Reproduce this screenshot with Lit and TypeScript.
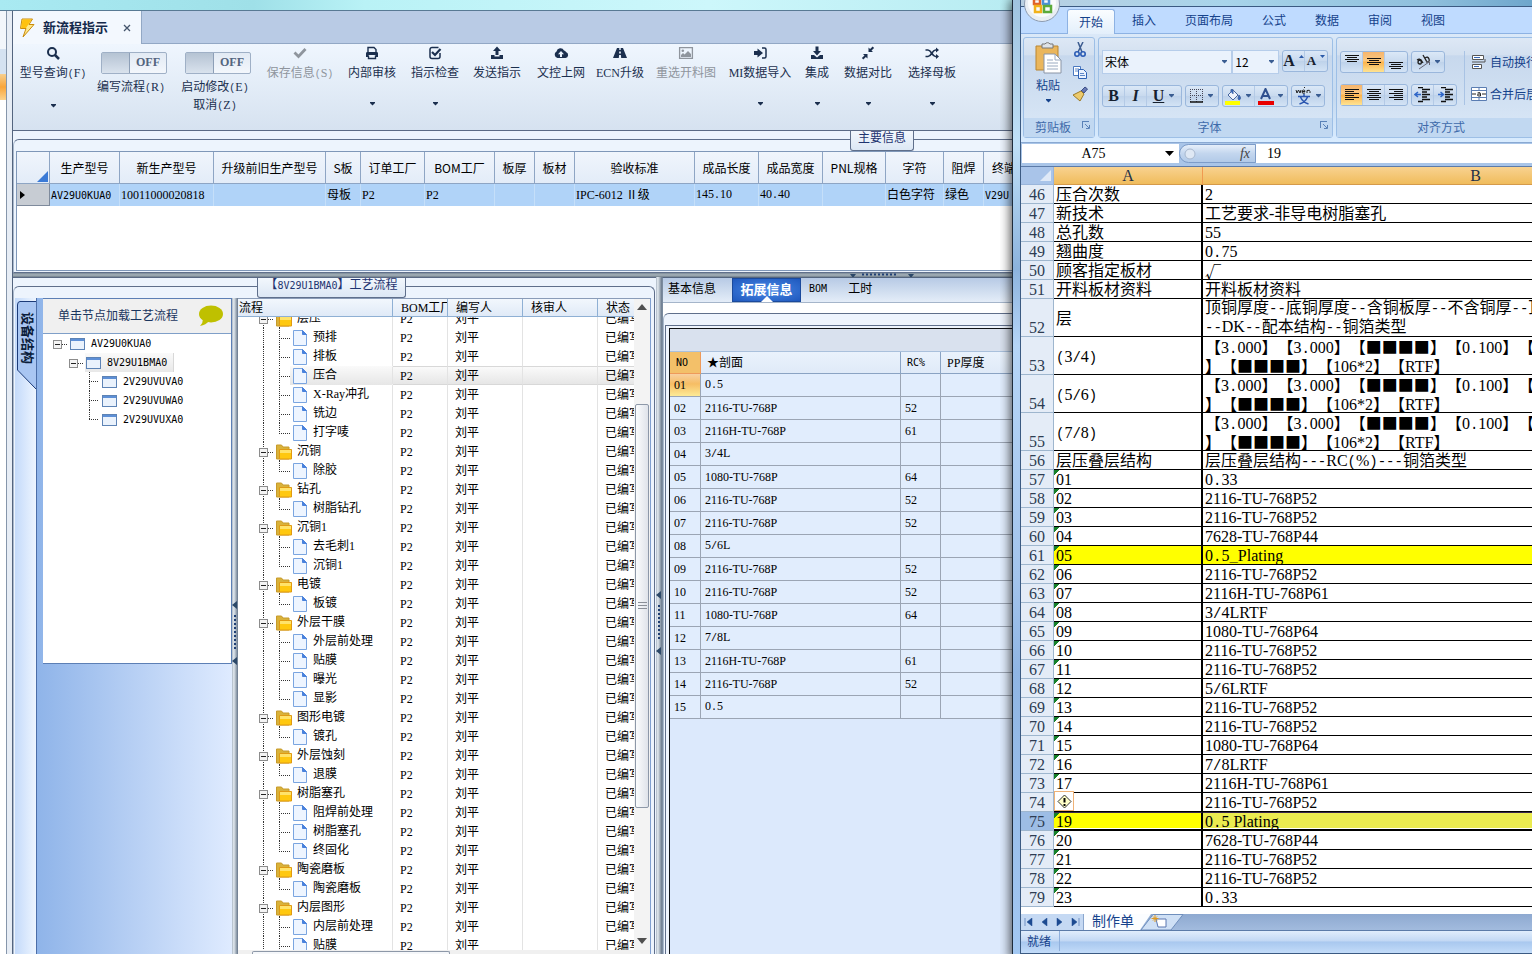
import { LitElement, html, svg, css, nothing } from "lit";
import { customElement } from "lit/decorators.js";
import { classMap } from "lit/directives/class-map.js";

const base = css`
  * { box-sizing: border-box; }
  :host {
    font-family: "Liberation Serif", "Noto Sans CJK SC", serif;
    font-size: 12px;
    line-height: 16px;
    text-spacing-trim: space-all;
  }
  button, input, select {
    font: inherit; color: inherit; margin: 0; padding: 0; border: 0; background: none; border-radius: 0;
  }
  svg { display: block; flex: none; }
  table { border-collapse: separate; border-spacing: 0; table-layout: fixed; }
  th, td { padding: 0; text-align: left; font-weight: normal; white-space: nowrap; overflow: hidden; }
  a { color: inherit; text-decoration: none; }
  .code { font-family: "DejaVu Sans Mono", monospace; font-size: 10px; }
  .wide { font-family: "Noto Sans CJK SC", sans-serif; }
  .punct { font-family: "Liberation Mono", monospace; font-size: var(--punct, 10px); }
`;

/** Keeps punctuation on the half-width grid and symbols on the full-width one. */
const cell = (text: string) =>
  text.split(/(--+|[.\/()_]|[■√★]+)/).map((part) =>
    /^[■√★]+$/.test(part)
      ? html`<span class="wide">${part}</span>`
      : /^(--+|[.\/()_])$/.test(part)
        ? html`<span class="punct">${part}</span>`
        : part
  );

const caret = html`<svg width="7" height="4" viewBox="0 0 7 4"><path d="M1 0h5v1L3.500 3.500 1 1z" fill="currentColor" /></svg>`;

const icons: Record<string, unknown> = {
  search: svg`<circle cx="7" cy="7" r="4" fill="none" stroke="currentColor" stroke-width="2"/><path d="M10 10l4 4" stroke="currentColor" stroke-width="2.500"/>`,
  check: svg`<path d="M2.500 7.500L6.500 11.500 13.500 4" fill="none" stroke="currentColor" stroke-width="2.800"/>`,
  print: svg`<path d="M4 7V2.500h6L12 4.500V7" fill="none" stroke="currentColor" stroke-width="1.400"/><path d="M3.500 7h9C13.500 7 14 7.500 14 8.500V12h-2.500v-2h-7v2H2V8.500C2 7.500 2.500 7 3.500 7z" fill="currentColor"/><path d="M4.500 10.500v3h7v-3" fill="none" stroke="currentColor" stroke-width="1.400"/>`,
  tick: svg`<path d="M13 8v3.500a2 2 0 0 1-2 2H5a2 2 0 0 1-2-2v-7a2 2 0 0 1 2-2h6.500" fill="none" stroke="currentColor" stroke-width="1.500"/><path d="M5 7l3 3 5.500-6" fill="none" stroke="currentColor" stroke-width="2.200"/>`,
  upload: svg`<path d="M8 1.500L12 6H9.500v4h-3V6H4z" fill="currentColor"/><path d="M2 10h3.500v1.500h5V10H14v4H2z" fill="currentColor"/>`,
  cloud: svg`<path d="M4.500 13A3.500 3.500 0 0 1 3.500 6.500 4 4 0 0 1 11 5.500 3.200 3.200 0 0 1 13 7 3.100 3.100 0 0 1 12.500 13z" fill="currentColor"/><path d="M8 6l3 3.200H9V12H7V9.200H5z" fill="#eaf2fc"/>`,
  road: svg`<path d="M5 3h2.300v2h1.400V3H11l4 10H9.200l-.3-3H7.100l-.3 3H1zM7.200 6.500L7.100 8.500h1.800l-.1-2z" fill="currentColor" fill-rule="evenodd"/>`,
  image: svg`<path d="M1.600 2.600h12.800v10.800H1.600z" fill="none" stroke="currentColor" stroke-width="1.300"/><circle cx="4.800" cy="5.800" r="1.300" fill="currentColor"/><path d="M3 12V10l2-2 1.500 1.500L10 6l3 3v3z" fill="currentColor"/>`,
  signin: svg`<path d="M2 6h3.500V3.500L11 8l-5.500 4.500V10H2z" fill="currentColor"/><path d="M10 3h2.500Q14 3 14 4.500v7Q14 13 12.500 13H10" fill="none" stroke="currentColor" stroke-width="1.500"/>`,
  download: svg`<path d="M6.500 1.500h3V6H12L8 10.500 4 6h2.500z" fill="currentColor"/><path d="M2 10h3l3 2.500L11 10h3v4H2z" fill="currentColor"/>`,
  compress: svg`<path d="M8.500 2.500l1.600 1.600L12.700 1.500l1.400 1.400-2.600 2.600L13 7H8.500zM7.500 13.500l-1.600-1.600-2.600 2.600-1.400-1.400 2.600-2.600L3 9h4.500z" fill="currentColor"/>`,
  shuffle: svg`<path d="M1.500 5H4c3.500 0 4 6.500 7.500 6.500H13M1.500 11.500H4C7.500 11.500 8 5 11.500 5H13" fill="none" stroke="currentColor" stroke-width="1.700"/><path d="M12 2.500L15 5l-3 2.500zM12 9l3 2.500L12 14z" fill="currentColor"/>`,
};
const icon = (name: string) => html`<svg width="16" height="16" viewBox="0 0 16 16">${icons[name]}</svg>`;

type Tool = { label: string; icon?: string; menu?: boolean; off?: boolean; extra?: string };
const tools: Tool[] = [
  { label: "型号查询(F)", icon: "search", menu: true },
  { label: "编写流程(R)" },
  { label: "启动修改(E)", extra: "取消(Z)" },
  { label: "保存信息(S)", icon: "check", off: true },
  { label: "内部审核", icon: "print", menu: true },
  { label: "指示检查", icon: "tick", menu: true },
  { label: "发送指示", icon: "upload" },
  { label: "文控上网", icon: "cloud" },
  { label: "ECN升级", icon: "road" },
  { label: "重选开料图", icon: "image", off: true },
  { label: "MI数据导入", icon: "signin", menu: true },
  { label: "集成", icon: "download", menu: true },
  { label: "数据对比", icon: "compress", menu: true },
  { label: "选择母板", icon: "shuffle", menu: true },
];

const infoCols: [string, number, string][] = [
  ["生产型号", 70, "AV29U0KUA0"], ["新生产型号", 94, "10011000020818"], ["升级前旧生产型号", 112, ""],
  ["S板", 35, "母板"], ["订单工厂", 64, "P2"], ["BOM工厂", 70, "P2"], ["板厚", 40, ""], ["板材", 40, ""],
  ["验收标准", 120, "IPC-6012 Ⅱ级"], ["成品长度", 64, "145.10"], ["成品宽度", 64, "40.40"],
  ["PNL规格", 63, ""], ["字符", 58, "白色字符"], ["阻焊", 40, "绿色"], ["终端", 42, "V29U"],
];

const flow: [string, string[]][] = [
  ["层压", ["预排", "排板", "压合", "X-Ray冲孔", "铣边", "打字唛"]],
  ["沉铜", ["除胶"]],
  ["钻孔", ["树脂钻孔"]],
  ["沉铜1", ["去毛刺1", "沉铜1"]],
  ["电镀", ["板镀"]],
  ["外层干膜", ["外层前处理", "贴膜", "曝光", "显影"]],
  ["图形电镀", ["镀孔"]],
  ["外层蚀刻", ["退膜"]],
  ["树脂塞孔", ["阻焊前处理", "树脂塞孔", "终固化"]],
  ["陶瓷磨板", ["陶瓷磨板"]],
  ["内层图形", ["内层前处理", "贴膜"]],
];

const stack: [string, string][] = [
  ["0.5", ""], ["2116-TU-768P", "52"], ["2116H-TU-768P", "61"], ["3/4L", ""], ["1080-TU-768P", "64"],
  ["2116-TU-768P", "52"], ["2116-TU-768P", "52"], ["5/6L", ""], ["2116-TU-768P", "52"], ["2116-TU-768P", "52"],
  ["1080-TU-768P", "64"], ["7/8L", ""], ["2116H-TU-768P", "61"], ["2116-TU-768P", "52"], ["0.5", ""],
];

const dots = "stroke-dasharray:1 1";
const expander = (x: number, y: number) => svg`
  <rect x=${x + 0.5} y=${y + 0.5} width="8" height="8" fill="#f4f4f4" stroke="#8c8c8c"/>
  <path d="M${x + 2} ${y + 4.5}h5" stroke="#222"/>`;
const folderIcon = svg`
  <path d="M38.500 3h5l1.500 2h6v12h-12.500z" fill="#d9b23a" stroke="#c79a2a"/>
  <path d="M41.500 7.500h12v9.500h-12z" fill="#ffc80f" stroke="#e09a12"/>
  <path d="M42 8h11v3h-11z" fill="#ffe36a"/>`;
const docIcon = svg`
  <path d="M55.500 2.500h9l4 4v11h-13z" fill="#eef5ff" stroke="#7aa5e0"/>
  <path d="M64.500 2.500l4 4h-4z" fill="#4a82dc" stroke="#4a82dc"/>`;

@customElement("splitter-bar")
class SplitterBar extends LitElement {
  static properties = { horizontal: { type: Boolean, reflect: true } };
  declare horizontal: boolean;
  static styles = [base, css`
    :host { display: flex; justify-content: center; align-items: center; flex: none; width: 6px; padding-top: 14px;
      background: linear-gradient(90deg, #aab6c3, #e3eaf0 30%, #8795a5 80%, #66758a); }
    :host([horizontal]) { width: auto; height: 4px; padding: 0 98px 0 0; justify-content: flex-end;
      background: linear-gradient(#7b8a97, #a7b3ba 50%, #71808c); }
  `];
  render() {
    return this.horizontal
      ? html`<svg width="64" height="5" viewBox="0 0 64 5"><path d="M0 1h6L3 5zM58 1h6l-3 4z" fill="#2c4868"/><path d="M12 1.500h36" stroke="#1f3f74" stroke-width="2" stroke-dasharray="2 2"/></svg>`
      : html`<svg width="6" height="64" viewBox="0 0 6 64"><path d="M5 0v8L0 4zM5 56v8l-5-4z" fill="#2c4868"/><path d="M3 14v36" stroke="#1f3f74" stroke-width="2" stroke-dasharray="2 2"/></svg>`;
  }
}

@customElement("flow-grid")
class FlowGrid extends LitElement {
  static styles = [base, css`
    :host { flex: 1; min-width: 0; display: flex; flex-direction: column; background: #fff; color: #000;
      border-top: 1px solid #8a9cb8; border-right: 1px solid #7f9fd0; }
    .top { display: flex; flex: 1; min-height: 0; }
    .view { flex: 1; min-width: 0; overflow: hidden; }
    .clip { overflow: hidden; }
    table { width: 397px; }
    th { height: 18px; padding-left: 8px; background: linear-gradient(#f2f7fd, #e0eaf7); border-right: 1px solid #8fb0d4; border-bottom: 1px solid #8fb0d4; line-height: 16px; }
    th:first-child { padding-left: 1px; }
    th:last-child, td:last-child { border-right: 0; }
    .rows { margin-top: -8px; }
    td { height: 19px; padding-left: 7px; border-right: 1px solid #e3e3e3; line-height: 18px; }
    td:first-child { padding-left: 0; }
    .node { display: flex; height: 19px; }
    .chosen td { background: linear-gradient(#fafafa, #e6e6e6); border-top: 1px solid #d8d8d8; border-bottom: 1px solid #d8d8d8; line-height: 16px; }
    .chosen td:first-child { background: linear-gradient(#fff, #fff) 0 0 / 52px 100% no-repeat border-box, linear-gradient(#fafafa, #e6e6e6) border-box; border-color: transparent #e3e3e3 transparent transparent; }
    .chosen .node { margin: -1px 0; line-height: 18px; }
    .bar { width: 16px; display: flex; flex-direction: column; align-items: center; background: #f3f3f3; color: #505050; padding: 5px 0 6px; }
    .gap { flex: 94 1 0; }
    .thumb { flex: 400 1 0; width: 14px; border: 1px solid #8d98a8; border-radius: 2px; background: linear-gradient(90deg, #fbfcfd, #dfe3ea); display: grid; place-items: center; }
    .rest { flex: 130 1 0; }
    .bottom { height: 4px; background: #f0f0f0; display: flex; }
    .slide { margin: 1px 0 0 14px; width: 198px; border: 1px solid #8d98a8; border-bottom: 0; border-radius: 2px 2px 0 0; background: #f5f7fa; }
  `];
  cols() {
    return html`<colgroup>${[155, 55, 75, 75, 37].map((w) => html`<col style="width:${w}px">`)}</colgroup>`;
  }
  row(name: string, guide: unknown, width: number, chosen = false) {
    return html`<tr class=${classMap({ chosen })}>
      <td><div class="node"><svg width=${width} height="19">${guide}</svg><span>${name}</span></div></td>
      <td>P2</td><td>刘平</td><td></td><td>已编写</td></tr>`;
  }
  render() {
    return html`
      <div class="top">
        <div class="view">
          <table>${this.cols()}<thead><tr><th>流程</th><th>BOM工厂</th><th>编写人</th><th>核审人</th><th>状态</th></tr></thead></table>
          <div class="clip"><table class="rows">${this.cols()}<tbody>
            ${flow.map(([group, steps]) => html`
              ${this.row(group, svg`<path d="M25.500 0v19M30 10.500h6M41.500 16v3" stroke="#333" style=${dots}/>${expander(21, 6)}${folderIcon}`, 59)}
              ${steps.map((s, i) => this.row(s, svg`<path d="M25.500 0v19M41.500 0v${i === steps.length - 1 && group !== "内层图形" ? 11 : 19}M41 10.500h11" fill="none" stroke="#333" style=${dots}/>${docIcon}`, 75, s === "压合"))}
            `)}
          </tbody></table></div>
        </div>
        <div class="bar">
          <svg width="10" height="6"><path d="M0 6h10L5 0z" fill="currentColor"/></svg>
          <div class="gap"></div>
          <div class="thumb"><svg width="9" height="8"><path d="M0 .5h9M0 3.500h9M0 6.500h9" stroke="#8a8f98"/></svg></div>
          <div class="rest"></div>
          <svg width="10" height="6"><path d="M0 0h10L5 6z" fill="currentColor"/></svg>
        </div>
      </div>
      <div class="bottom"><div class="slide"></div></div>`;
  }
}

@customElement("process-window")
class ProcessWindow extends LitElement {
  static styles = [base, css`
    :host { display: flex; flex-direction: column; min-width: 0; height: 100vh; overflow: hidden; color: #1b2f4e; }
    .aero { height: 11px; flex: none; border-bottom: 1px solid #587a94; background: linear-gradient(90deg, #a9eaf2, #9fe0e8 25%, #b9f2f6 36%, #cdf7fb 70%, #b8ecf2); }
    .body { flex: 1; min-height: 0; display: flex; }
    .sliver { width: 13px; flex: none; display: flex; border-right: 1px solid #54657f; background: #e7edf5; }
    .sliver > div { width: 7px; border-right: 1px solid #8696ab; background: linear-gradient(#f2f6fb 38px, #d5e2f1 38px, #d5e2f1 63px, #f7cf8e 63px, #f9a53a 76px, #fcd38d 89px, #fff 89px); }
    .main { flex: 1; min-width: 0; display: flex; flex-direction: column; }
    .tabs { height: 33px; flex: none; display: flex; background: #b9cbe5; border-bottom: 1px solid #92a8c5; }
    .tab { height: 33px; width: 129px; display: flex; align-items: center; padding-left: 6px; gap: 7px; background: #f3f8fe; border-right: 1px solid #92a8c5; font-size: 13px; font-weight: bold; color: #14294b; }
    .tab button { margin-left: 8px; }
    .tools { height: 86px; flex: none; display: grid; grid-template-columns: 78px 78px 90px 80px 64px 62px 62px 66px 52px 80px 68px 46px 56px 72px; padding-left: 1px; background: linear-gradient(#eff6fe, #d6e2f0); }
    .tool { display: flex; flex-direction: column; align-items: center; justify-content: flex-start; padding-top: 1px; white-space: nowrap; color: #1b2f4e; }
    .tool .name { margin-top: 4px; }
    .tool .drop { margin-top: 21px; }
    .tool:disabled { color: #8f959d; }
    .switch { display: flex; flex-direction: column; align-items: center; padding-top: 8px; white-space: nowrap; line-height: 17px; }
    .track { display: flex; width: 66px; height: 22px; margin: 0 0 5px 6px; border: 1px solid #9fb0c6; border-radius: 2px; background: linear-gradient(#e2eaf4, #f3f7fc); }
    .track input { appearance: none; width: 28px; height: 20px; border-right: 1px solid #8d9fb7; background: linear-gradient(#b5c3d3, #d9e2ed); }
    .track span { flex: 1; text-align: center; line-height: 19px; font-weight: bold; color: #53657e; }
    .panel { position: relative; border-top: 1px solid #5b6a85; background: #edf4fd; padding-top: 8px; display: flex; flex-direction: column; min-width: 0; }
    .info { height: 143px; flex: none; }
    .frame { flex: 1; min-height: 0; min-width: 0; display: flex; border: 1px solid #5f6f8b; border-left-color: #a9b8cc; border-right: 0; border-radius: 6px 0 0 0; }
    .info .frame { padding: 11px 0 1px 2px; }
    .title { position: absolute; top: 0; height: 20px; padding: 0 7px; border: 1px solid #5f6f8b; border-top: 0; border-radius: 0 0 3px 3px; background: linear-gradient(#f2f7fd, #dce7f4); color: #1f3470; line-height: 15px; white-space: nowrap; }
    .title.one { right: 98px; }
    .sheet { flex: 1; min-width: 0; overflow: hidden; border: 1px solid #7f97b8; border-right: 0; background: #fff; color: #000; }
    .sheet table { width: 1009px; }
    .sheet th { height: 32px; text-align: center; font-family: "Noto Sans CJK SC", sans-serif; background: linear-gradient(#f0f5fc, #e3ecf8); border-right: 1px solid #8ea5c4; border-bottom: 1px solid #8ea5c4; }
    .sheet th:last-child { text-align: left; padding-left: 8px; }
    .sheet td { height: 22px; padding-left: 1px; background: #b0d3f8; border-right: 1px solid #c5dff9; }
    .sheet td:first-child { background: #c7ccd3; border-right-color: #7e8a9c; border-bottom: 1px solid #7e8a9c; padding-left: 3px; }
    .sheet th:first-child svg { margin: 17px 0 0 20px; }
    .lower { flex: 1; min-height: 0; display: flex; }
    .left { flex: 645 1 0; }
    .left .frame { border-right: 1px solid #5f6f8b; border-radius: 6px 6px 0 0; border-bottom: 0; padding: 11px 3px 0 1px; margin-right: 1px; }
    .title.two { left: 38%; }
    .side { width: 21px; flex: none; background: linear-gradient(90deg, #c4dafa, #edf5ff); }
    .side button { position: relative; width: 21px; height: 94px; margin-top: 3px; font-weight: bold; color: #0c1e3c; display: block; }
    .side button svg { position: absolute; left: 0; top: 0; }
    .side span { position: relative; display: block; margin: -20px 0 0 3px; writing-mode: vertical-rl; text-orientation: sideways; line-height: 19px; font-size: 13px; }
    .dock { flex: 0 0 196px; padding-left: 6px; background: linear-gradient(90deg, #8fb4e9, #dfebff); border-left: 1px solid #4c6ea8; }
    .device { height: 366px; border: 1px solid #5c7fb5; border-width: 1px 1px 1px 0; background: #fff; color: #000; display: flex; flex-direction: column; }
    .hint { height: 35px; flex: none; display: flex; align-items: center; justify-content: space-between; padding: 0 7px 0 15px; background: #f0f0f0; border-bottom: 1px solid #7f9fc8; color: #1b355e; }
    .device li { display: flex; align-items: center; height: 19px; }
    .device ul { list-style: none; margin: 0; padding: 0; }
    .device li .code { padding: 0 5px 0 6px; line-height: 18px; }
    .device li.open { width: 131px; background: linear-gradient(#fff, #fff) 0 0 / 42px 100% no-repeat, linear-gradient(#fafafa, #e8e8e8); box-shadow: inset -1px 0 #d8d8d8; }
    .right { flex: 350 1 0; min-width: 0; overflow: hidden; display: flex; flex-direction: column; border-top: 1px solid #54657f; border-left: 1px solid #7a8b9f; background: #fff; color: #000; }
    .nav { height: 25px; flex: none; display: flex; background: linear-gradient(#b7cae5, #e4edf8); border-bottom: 1px solid #a5b5ca; line-height: 22px; padding-left: 5px; }
    .nav a { margin-right: 16px; white-space: nowrap; }
    .nav a.on { position: relative; width: 69px; margin-right: 8px; text-align: center; background: radial-gradient(#4a8ae8, #1f58bd); border: 1px solid #1b4a9c; color: #fff; font-weight: bold; font-size: 13px; }
    .nav a.on svg { position: absolute; left: 28px; bottom: -1px; }
    .nav .code { margin-right: 21px; }
    .right .frame { margin-top: 10px; background: #eef4fd; padding: 11px 0 0 1px; border-bottom: 0; }
    .well { flex: 1; min-width: 0; border: 1px solid #5f6f8b; border-width: 1px 0 0 1px; padding: 2px 0 0 3px; }
    .data { height: 100%; overflow: hidden; border: 1px solid #101318; border-width: 1px 0 0 1px; background: #dce9fc; }
    .group { height: 23px; background: #d9e1ee; border-bottom: 1px solid #a9c0dc; }
    .data table { width: 371px; }
    .data td { height: 23px; padding-left: 4px; background: #e1edfd; border-right: 1px solid #9ba5b4; border-bottom: 1px solid #9ba5b4; }
    .data th { height: 22px; padding-left: 6px; background: linear-gradient(#eaf2fc, #dfeaf8); border-right: 1px solid #8aa3c3; border-bottom: 1px solid #8aa3c3; }
    .data th:first-child { background: #f3c069; border-right-color: #ee9a5a; border-bottom-color: #ee9a5a; }
    .data tr.cur td:first-child { background: linear-gradient(#f8d0a0, #f6bd64 45%, #fdea96); }
  `];
  tool(t: Tool) {
    if (!t.icon)
      return html`<label class="switch"><span class="track"><input type="checkbox"><span>OFF</span></span>
        <span>${cell(t.label)}</span>${t.extra ? html`<span>${cell(t.extra)}</span>` : nothing}</label>`;
    return html`<button class="tool" ?disabled=${!!t.off}>${icon(t.icon)}<span class="name">${cell(t.label)}</span>
      ${t.menu ? html`<span class="drop">${caret}</span>` : nothing}</button>`;
  }
  treeRow(name: string, level: number, last = false) {
    const x = level * 16;
    const guides = level === 2
      ? svg`<path d="M46.500 0v${last ? 10 : 19}M46 9.500h10" fill="none" stroke="#333" style=${dots}/>`
      : svg`<path d="M${x + 19} 10.500h5" stroke="#333" style=${dots}/>${expander(x + 10, 6)}`;
    return html`<li class=${classMap({ open: level === 1 })}><svg width=${x + 42} height="19">${guides}
      <rect x=${x + 27.5} y="4.500" width="14" height="11" fill="#eaf2fc" stroke="#5d83b5"/><path d="M${x + 28} 6h13" stroke="#5d8fd6" stroke-width="2"/></svg>
      <span class="code">${name}</span></li>`;
  }
  render() {
    return html`
      <div class="aero"></div>
      <div class="body">
        <div class="sliver"><div></div></div>
        <div class="main">
          <div class="tabs"><div class="tab">
            <svg width="17" height="20" viewBox="0 0 17 20"><path d="M3 1h10.500L10 6.500h5L4 19l3-8.500H1.500z" fill="#ffe98a" stroke="#c98b0c"/><path d="M3.500 1.500h9L9 7l-2 3H2.200z" fill="#ffc20e"/></svg>
            <span>新流程指示</span>
            <button aria-label="关闭"><svg width="8" height="8"><path d="M1 1l6 6M7 1L1 7" stroke="#44546c" stroke-width="1.300"/></svg></button>
          </div></div>
          <div class="tools">${tools.map((t) => this.tool(t))}</div>
          <section class="panel info">
            <div class="frame"><div class="sheet"><table>
              <colgroup><col style="width:33px">${infoCols.map((c) => html`<col style="width:${c[1]}px">`)}</colgroup>
              <thead><tr><th><svg width="11" height="11"><path d="M11 0v11H0z" fill="#3b7ad6"/></svg></th>${infoCols.map((c) => html`<th>${c[0]}</th>`)}</tr></thead>
              <tbody><tr><td><svg width="5" height="8"><path d="M0 0v8l5-4z"/></svg></td>
                ${infoCols.map((c) => html`<td>${/^[A-Z]+\d+[A-Z]/.test(c[2]) ? html`<span class="code">${c[2]}</span>` : cell(c[2])}</td>`)}</tr></tbody>
            </table></div></div>
            <div class="title one">主要信息</div>
          </section>
          <splitter-bar horizontal></splitter-bar>
          <div class="lower">
            <section class="panel left">
              <div class="frame">
                <div class="side"><button>
                  <svg width="21" height="94"><path d="M21 .5H5Q2.500 .5 2.500 4V69L21 88" fill="#a9c6f2" stroke="#1c3b78"/></svg>
                  <span>设备结构</span></button></div>
                <div class="dock"><div class="device">
                  <div class="hint"><span>单击节点加载工艺流程</span>
                    <svg width="26" height="22" viewBox="0 0 26 22"><ellipse cx="13" cy="9" rx="12" ry="8.500" fill="#bfc000"/><path d="M5 14q0 4-3 7 6-1 9-5z" fill="#bfc000"/></svg></div>
                  <ul>
                    ${this.treeRow("AV29U0KUA0", 0)}${this.treeRow("8V29U1BMA0", 1)}
                    ${this.treeRow("2V29UVUVA0", 2)}${this.treeRow("2V29UVUWA0", 2)}${this.treeRow("2V29UVUXA0", 2, true)}
                  </ul>
                </div></div>
                <splitter-bar></splitter-bar>
                <flow-grid></flow-grid>
              </div>
              <div class="title two">【<span class="code">8V29U1BMA0</span>】工艺流程</div>
            </section>
            <splitter-bar></splitter-bar>
            <section class="right">
              <nav class="nav">
                <a href="#basic">基本信息</a>
                <a href="#extended" class="on">拓展信息<svg width="12" height="6"><path d="M0 6L6 0l6 6z" fill="#fff"/></svg></a>
                <a href="#bom" class="code">BOM</a><a href="#hours">工时</a>
              </nav>
              <div class="frame"><div class="well"><div class="data">
                <div class="group"></div>
                <table>
                  <colgroup>${[31, 200, 40, 100].map((w) => html`<col style="width:${w}px">`)}</colgroup>
                  <thead><tr><th><span class="code">NO</span></th><th>${cell("★剖面")}</th><th><span class="code">RC%</span></th><th>PP厚度</th></tr></thead>
                  <tbody>${stack.map(([face, rc], i) => html`<tr class=${classMap({ cur: i === 0 })}>
                    <td>${String(i + 1).padStart(2, "0")}</td><td>${cell(face)}</td><td>${rc}</td><td></td></tr>`)}</tbody>
                </table>
              </div></div></div>
            </section>
          </div>
        </div>
      </div>`;
  }
}

const laminate = ["0.33", "2116-TU-768P52", "2116-TU-768P52", "7628-TU-768P44", "0.5_Plating", "2116-TU-768P52",
  "2116H-TU-768P61", "3/4LRTF", "1080-TU-768P64", "2116-TU-768P52", "2116-TU-768P52", "5/6LRTF", "2116-TU-768P52",
  "2116-TU-768P52", "1080-TU-768P64", "7/8LRTF", "2116H-TU-768P61", "2116-TU-768P52", "0.5 Plating", "7628-TU-768P44",
  "2116-TU-768P52", "2116-TU-768P52", "0.33"];
const copper = ["【3.000】【3.000】【■■■■】【0.100】【", "】【■■■■】【106*2】【RTF】"];
type Row = { a: string; b: string[] };
const rows: Row[] = [
  { a: "压合次数", b: ["2"] },
  { a: "新技术", b: ["工艺要求-非导电树脂塞孔"] },
  { a: "总孔数", b: ["55"] },
  { a: "翘曲度", b: ["0.75"] },
  { a: "顾客指定板材", b: ["√"] },
  { a: "开料板材资料", b: ["开料板材资料"] },
  { a: "层", b: ["顶铜厚度--底铜厚度--含铜板厚--不含铜厚--顶", "--DK--配本结构--铜箔类型"] },
  { a: "(3/4)", b: copper },
  { a: "(5/6)", b: copper },
  { a: "(7/8)", b: copper },
  { a: "层压叠层结构", b: ["层压叠层结构---RC(%)---铜箔类型"] },
  ...laminate.map((b, i) => ({ a: String(i + 1).padStart(2, "0"), b: [b] })),
];

const rules = (y: number, n: number, widths: number[], align: "l" | "c" | "r") => {
  let d = "";
  for (let i = 0; i < n; i++) {
    const l = widths[i % widths.length];
    const x = align === "l" ? 1 : align === "r" ? 15 - l : 8 - l / 2;
    d += `M${x} ${y + i * 2 + 0.5}h${l}`;
  }
  return html`<svg width="16" height="16"><path d=${d} stroke="#111"/></svg>`;
};

@customElement("sheet-window")
class SheetWindow extends LitElement {
  static styles = [base, css`
    :host { --punct: 14px; position: relative; z-index: 2; display: flex; flex-direction: column; min-width: 0; height: 100vh; padding: 0 0 6px 7px;
      background: linear-gradient(#9fc3df, #bfe0f7 15%, #8cb3dd 28%, #b5d5f7 36%, #a3c4ec 60%, #8fb5e3 70%, #a3c8f2);
      border-left: 1px solid #1d2b3a; box-shadow: -2px 0 10px rgba(0, 0, 0, .65); overflow: hidden; clip-path: inset(0 0 0 -12px); font-size: 12px; color: #15428b; }
    .frame { flex: 1; min-height: 0; display: flex; flex-direction: column; overflow: hidden; border: 1px solid #3b5a82; border-width: 0 0 1px 1px; background: #bfdbff; white-space: nowrap; }
    .caption { height: 7px; flex: none; border-bottom: 1px solid #3b5a82; background: linear-gradient(90deg, #b8cfe2, #a8d4ea 40%, #8fbfdc 80%, #6ea6cc); }
    .orb { position: absolute; left: 10px; top: -16px; }
    .tabs { height: 27px; flex: none; display: flex; align-items: flex-end; padding-left: 46px; gap: 5px; font-family: "Noto Sans CJK SC", sans-serif; border-bottom: 1px solid #8db2e3; }
    .tabs a { height: 25px; padding: 0 12px; line-height: 24px; }
    .tabs a.on { margin-bottom: -1px; border: 1px solid #8db2e3; border-bottom: 0; border-radius: 3px 3px 0 0; background: linear-gradient(#fafdff, #e3effb); padding: 0 11px; }
    .ribbon { height: 108px; flex: none; display: flex; gap: 3px; padding: 3px 0 4px 2px; background: linear-gradient(#dbe9f8, #cfe1f4 15%, #c6daf0 60%, #d9ecff); font-family: "Noto Sans CJK SC", sans-serif; }
    .group { flex: none; display: flex; flex-direction: column; border: 1px solid #9dbfe6; border-radius: 3px; background: linear-gradient(#dde8f5, #d3e0f0 17%, #c7d8ed 18%, #dae8f7); }
    .label { height: 19px; display: flex; background: #c1d8f1; color: #3e6aaa; line-height: 18px; }
    .label span { flex: 1; text-align: center; }
    .label svg { margin: 3px 4px 0 0; }
    .area { flex: 1; min-height: 0; }
    .clip { width: 72px; }
    .clip .area { display: flex; justify-content: space-between; padding: 4px 6px 0 10px; }
    .paste { display: flex; flex-direction: column; align-items: center; }
    .paste span { margin: 3px 0 6px; }
    .mini { display: flex; flex-direction: column; gap: 6px; }
    .font { width: 235px; }
    .two { display: flex; flex-direction: column; gap: 11px; padding: 12px 4px 0 3px; }
    .line { display: flex; gap: 3px; height: 24px; align-items: flex-start; }
    .line + .line { height: 22px; }
    .pick { display: grid; width: 131px; height: 24px; background: #eaf2fc; border: 1px solid #b6cdea; color: #000; }
    .pick.size { width: 47px; margin-left: -3px; }
    .pick > * { grid-area: 1 / 1; }
    .pick select { appearance: none; padding-left: 2px; width: 100%; }
    .pick svg { place-self: center end; margin-right: 3px; color: #3a5d92; }
    .set { display: flex; height: 22px; border: 1px solid #9ab7dc; border-radius: 3px; background: linear-gradient(#dbe8f7, #c8d9ee 50%, #bed2ea 51%, #d3e3f5); color: #3a5d92; }
    .set button { display: flex; align-items: center; justify-content: center; gap: 4px; width: 22px; border-right: 1px solid #b4cae6; }
    .set button:last-child { border-right: 0; }
    .set button.split { width: 32px; gap: 3px; }
    .set button.under { width: 34px; }
    .set button.on { background: linear-gradient(#f6b56d, #fbc981 45%, #fbb24c 50%, #fee392); }
    .set b, .set i, .set u { font-family: "Liberation Serif", serif; font-size: 16px; color: #16202e; font-weight: bold; }
    .set .small { font-size: 13px; }
    .align { width: 400px; }
    .align .area { display: flex; gap: 4px; padding: 13px 0 0 3px; }
    .stack { display: flex; flex-direction: column; gap: 9px; }
    .wraps { border-left: 1px solid #a9c3e4; margin-left: 3px; padding-left: 6px; display: flex; flex-direction: column; gap: 11px; height: 54px; }
    .wraps button { display: flex; align-items: center; gap: 3px; height: 22px; }
    .formula { height: 24px; flex: none; display: flex; padding: 1px 0 3px 1px; color: #000; background: #a9c5e8; border-top: 1px solid #8aa9d2; font-size: 14px; }
    .name { width: 157px; background: #fff; display: flex; align-items: center; padding-right: 5px; }
    .name input { width: 100%; min-width: 0; text-align: center; }
    .pill { width: 77px; display: flex; align-items: center; justify-content: space-between; padding: 0 5px 0 4px; border: 1px solid #7d9cc8; border-radius: 11px 0 0 11px; background: linear-gradient(#e6effa, #c3d6ee 50%, #b2cae8); color: #444; }
    .entry { flex: 1; min-width: 0; background: #fff; padding-left: 11px; }
    .grid { flex: 1; min-height: 0; overflow: hidden; background: #fff; color: #000; font-size: 16px; line-height: 18px; border-top: 1px solid #5c7ba8; }
    .grid table { width: 728px; }
    thead th { height: 18px; text-align: center; background: linear-gradient(#f8d290, #f0bc5c); border-right: 1px solid #f09a50; border-bottom: 1px solid #d59a4a; color: #223048; line-height: 16px; padding-top: 1px; }
    thead th:first-child { background: #a9c4e9; border-color: #9ab5da; padding: 0; }
    thead th:first-child svg { margin-left: 19px; }
    tbody th { height: 19px; text-align: center; vertical-align: bottom; background: #e4ecf7; border-right: 1px solid #9eb6ce; border-bottom: 1px solid #9eb6ce; color: #2d3c52; line-height: 17px; }
    td { height: 19px; padding-left: 2px; border-bottom: 1px solid #000; }
    td div { height: 18px; overflow: hidden; line-height: 20px; }
    td.pair div { line-height: 18px; }
    td.pair div + div { height: 19px; line-height: 20px; }
    td.a { position: relative; border-right: 2px solid #000; }
    td.flag { background: linear-gradient(135deg, #16802a 4px, transparent 4px); }
    .fill td { background-color: #ff0; }
    .sel td { border-top: 1px solid #3b2850; box-shadow: inset 0 -1px #fff; border-bottom: 2px solid #000; }
    .sel td.b { background-color: #ebeb50; }
    .sel td div { height: 16px; line-height: 18px; }
    .sel th { background: #9dbde5; }
    .warn { position: absolute; left: 0; top: -2px; width: 20px; height: 20px; display: grid; place-items: center; background: #fff; border: 1px solid #efb277; }
    td.a.noted { overflow: visible; }
    .sheets { height: 17px; flex: none; display: flex; background: linear-gradient(#8ea9d0, #a2bbde); border-bottom: 1px solid #5b7ba8; font-size: 14px; }
    .steps { width: 63px; display: flex; align-items: center; justify-content: space-around; background: #c5d9f3; border-right: 1px solid #8aa6cd; color: #1c4a91; }
    .sheets a { background: #fbfdff; padding: 0 5px 0 8px; line-height: 16px; width: 56px; }
    .status { height: 22px; flex: none; background: linear-gradient(#e0edfc, #c2d8f4 45%, #a9c8ef 50%, #c3dcf9); font-family: "Noto Sans CJK SC", sans-serif; line-height: 20px; padding-left: 6px; }
    .status span { display: inline-block; padding-right: 8px; border-right: 1px solid #8fb0dc; }
    .align .label span { flex: 0 0 208px; }
  `];
  render() {
    const line = (y: number) => rules(y, 4, [14, 10], "c");
    return html`
      <div class="frame">
        <div class="caption"></div>
        <div class="tabs">
          <a class="on" href="#home">开始</a><a href="#insert">插入</a><a href="#layout">页面布局</a><a href="#formulas">公式</a>
          <a href="#data">数据</a><a href="#review">审阅</a><a href="#view">视图</a>
        </div>
        <div class="ribbon">
          <div class="group clip">
            <div class="area">
              <button class="paste">
                <svg width="28" height="32" viewBox="0 0 28 32"><path d="M2 4h22v24H2z" fill="#eab65c" stroke="#b98530"/><path d="M8 2h3a3 3 0 0 1 5 0h3v4H8z" fill="#dfe3e8" stroke="#777"/><path d="M10 12h11l6 6v13H10z" fill="#fff" stroke="#8a94a5"/><path d="M21 12v6h6M13 18h6M13 21h11M13 24h11M13 27h11" fill="none" stroke="#9aaac0"/></svg>
                <span>粘贴</span>${caret}</button>
              <div class="mini">
                <button aria-label="剪切"><svg width="16" height="16"><path d="M6 0l4 10M11 0L6 10" stroke="#3c5c90" stroke-width="1.500"/><circle cx="5" cy="12" r="2.200" fill="none" stroke="#2a5bb5" stroke-width="1.600"/><circle cx="11" cy="12" r="2.200" fill="none" stroke="#2a5bb5" stroke-width="1.600"/></svg></button>
                <button aria-label="复制"><svg width="16" height="16"><path d="M1.500 2.500h7v9h-7z" fill="#fff" stroke="#4b79c0"/><path d="M6.500 5.500h5l3 3v6h-8z" fill="#eaf2ff" stroke="#2f62b5"/><path d="M3 5h4M3 7h3M8 9.500h4M8 11.500h5" stroke="#5e88c8"/></svg></button>
                <button aria-label="格式刷"><svg width="16" height="16"><path d="M9 5l4-4 2.500 2L12 7z" fill="#6879b4" stroke="#3b4d85"/><path d="M1 9l8-4 3 3-4 7z" fill="#ecca6c" stroke="#9b7a28"/></svg></button>
              </div>
            </div>
            <div class="label"><span>剪贴板</span><svg width="8" height="8"><path d="M0 .5h7M.5 0v7" stroke="#5a82b8"/><path d="M3 3l4 4M7.500 4v3.500H4" fill="none" stroke="#5a82b8"/></svg></div>
          </div>
          <div class="group font">
            <div class="area two">
              <div class="line">
                <div class="pick"><select aria-label="字体"><option>宋体</option></select>${caret}</div>
                <div class="pick size"><select aria-label="字号"><option>12</option></select>${caret}</div>
                <div class="set"><button aria-label="增大字号"><b>A</b><svg width="5" height="12"><path d="M0 3h5L2.500 0z" fill="#2c5aa8"/></svg></button><button aria-label="减小字号"><b class="small">A</b><svg width="5" height="12"><path d="M0 0h5L2.500 3z" fill="#2c5aa8"/></svg></button></div>
              </div>
              <div class="line">
                <div class="set"><button><b>B</b></button><button><i>I</i></button><button class="under"><u>U</u>${caret}</button></div>
                <div class="set"><button class="split" aria-label="边框"><svg width="14" height="14"><path d="M.5 0v13M6.500 0v13M12.500 0v13M0 .5h13M0 6.500h13" stroke="#445" style=${dots}/><path d="M0 13h13" stroke="#111" stroke-width="1.500"/></svg>${caret}</button></div>
                <div class="set">
                  <button class="split" aria-label="填充颜色"><svg width="17" height="17"><path d="M3 7l5-5 5 5-5 5z" fill="#eef3fb" stroke="#4767a0"/><path d="M6 4V1.500h2V6M14 7q3 4 0 5-2-1 0-5" fill="#2d66c4" stroke="#4767a0"/><path d="M0 13h15v4H0z" fill="#ff0"/></svg>${caret}</button>
                  <button class="split" aria-label="字体颜色"><svg width="16" height="17"><path d="M3 11L7.500 1 12 11M5 8h5" fill="none" stroke="#2e4f8f" stroke-width="2"/><path d="M0 13h16v4H0z" fill="#e80000"/></svg>${caret}</button>
                </div>
                <div class="set"><button class="split" aria-label="拼音"><svg width="17" height="18"><path d="M1 3l1 3 1.500-3L5 6l1-3M7 4.500h3Q10 3 8.500 3T7 5t3 1M12 6V3.500q3-1 3 1V6M9 1l1-1" fill="none" stroke="#222"/><path d="M3 9.500h12M9 7v2.500M5.500 10q2 5 8 7M12.500 10q-2 5-8 7" fill="none" stroke="#2b56b0" stroke-width="1.500"/></svg>${caret}</button></div>
              </div>
            </div>
            <div class="label"><span>字体</span><svg width="8" height="8"><path d="M0 .5h7M.5 0v7" stroke="#5a82b8"/><path d="M3 3l4 4M7.500 4v3.500H4" fill="none" stroke="#5a82b8"/></svg></div>
          </div>
          <div class="group align">
            <div class="area">
              <div class="stack">
                <div class="line">
                  <div class="set"><button aria-label="顶端对齐">${rules(1, 4, [14, 10], "c")}</button><button class="on" aria-label="垂直居中">${line(4)}</button><button aria-label="底端对齐">${line(8)}</button></div>
                  <div class="set"><button class="split" aria-label="方向"><svg width="16" height="16"><path d="M2 6q3-2 4 1t-1 3-2-2 3-2l2 3M8 1l4 7q3 0 2-3t-4-1" fill="none" stroke="#222" stroke-width="1.300"/><path d="M4 15L14 8M11 8h3.500v3" fill="none" stroke="#667"/></svg>${caret}</button></div>
                </div>
                <div class="line">
                  <div class="set"><button class="on" aria-label="左对齐">${rules(2, 6, [14, 9], "l")}</button><button aria-label="居中">${rules(2, 6, [14, 10], "c")}</button><button aria-label="右对齐">${rules(2, 6, [14, 9], "r")}</button></div>
                  <div class="set"><button aria-label="减少缩进">${this.indent(false)}</button><button aria-label="增加缩进">${this.indent(true)}</button></div>
                </div>
              </div>
              <div class="wraps">
                <button><svg width="16" height="16"><path d="M1.500 1.500h11v4h-11zM1.500 10.500h9v4h-9z" fill="#fff" stroke="#555"/><path d="M1 8h13V5" fill="none" stroke="#555"/><path d="M3 3.500h6M3 12.500h5" stroke="#3566b5"/></svg>自动换行</button>
                <button><svg width="16" height="16"><path d="M.5 1.500h15v13H.5zM.5 4.500h15M.5 11.500h15M8 1v3M8 12v3" fill="#fff" stroke="#5a7db2"/><path d="M1 8h4M11 8h4M6.500 7q3-1.500 3 1v2q-3 .5-3-1t3-1" fill="none" stroke="#222"/></svg>合并后居中</button>
              </div>
            </div>
            <div class="label"><span>对齐方式</span></div>
          </div>
        </div>
        <div class="formula">
          <div class="name"><input aria-label="名称框" value="A75"><svg width="9" height="5"><path d="M0 0h9L4.500 5z"/></svg></div>
          <div class="pill"><svg width="12" height="12"><circle cx="6" cy="6" r="5" fill="#dfe8f4" stroke="#a8b8cf"/></svg><i>fx</i></div>
          <input class="entry" aria-label="编辑栏" value="19">
        </div>
        <div class="grid"><table>
          <colgroup><col style="width:33px"><col style="width:149px"><col style="width:546px"></colgroup>
          <thead><tr><th><svg width="11" height="11"><path d="M11 0v11H0z" fill="#dfe9f7"/></svg></th><th>A</th><th>B</th></tr></thead>
          <tbody>${rows.map((r, i) => {
            const n = 46 + i;
            return html`<tr class=${classMap({ fill: n === 61 || n === 75, sel: n === 75 })}>
              <th>${n}</th>
              <td class=${classMap({ a: true, flag: n > 56, noted: n === 74 })}>${n === 74
                ? html`<button class="warn" aria-label="错误检查"><svg width="15" height="15"><path d="M7.500 1l6.500 6.500-6.500 6.500L1 7.500z" fill="#ffffc8" stroke="#333"/><path d="M7.500 4v4.500M7.500 10v2" stroke="#000" stroke-width="2"/></svg></button>`
                : html`<div>${cell(r.a)}</div>`}</td>
              <td class=${classMap({ b: true, pair: r.b.length > 1 })}>${r.b.map((t) => html`<div>${cell(t)}</div>`)}</td></tr>`;
          })}</tbody>
        </table></div>
        <div class="sheets">
          <div class="steps">${["M1 0v8M8 0L3 4l5 4z", "M7 0L2 4l5 4z", "M2 0l5 4-5 4z", "M8 0v8M1 0l5 4-5 4z"].map((d) => html`<svg width="9" height="8"><path d=${d} fill="currentColor" stroke="currentColor" stroke-width=".5"/></svg>`)}</div>
          <a href="#sheet">制作单</a>
          <svg width="44" height="16"><path d="M0 16V0h11L0 16z" fill="#fbfdff"/><path d="M1 16L13 .5h30L31 16z" fill="#cfe0f5" stroke="#6f8fbd"/><path d="M16 5h10v8H18z" fill="#fff" stroke="#5b76b0"/><path d="M15 1v7M11.500 4.500h7M13 2.500l4 4M17 2.500l-4 4" stroke="#e09a20"/></svg>
        </div>
        <div class="status"><span>就绪</span></div>
      </div>
      <svg class="orb" width="40" height="40" viewBox="0 0 40 40">
        <circle cx="19" cy="20" r="17.500" fill="#e9eef4" stroke="#8c9bb0"/><circle cx="19" cy="19" r="14" fill="#fafbfd"/>
        <g fill="none" stroke-width="2.500"><path d="M11 15h6v5h-6z" stroke="#e0622a"/><path d="M20 15h6v5h-6z" stroke="#4a90d8"/><path d="M12 22h6v6h-6z" stroke="#f2b21c"/><path d="M21 22h7v6h-7z" stroke="#5cab3c"/></g>
      </svg>`;
  }
  indent(right: boolean) {
    return html`<svg width="17" height="16"><path d="M8 2.500h8M8 5h5M8 7.500h8M8 10h5M8 12.500h8M4 14.500h5M4 .5h5" stroke="#111" stroke-width="1.300"/><path d=${right ? "M1 7.500h5M3.500 5L6.500 7.500l-3 2.500" : "M2 7.500h5M4 5L1 7.500 4 10"} fill="none" stroke="#2f66c8" stroke-width="1.500"/></svg>`;
  }
}

@customElement("app-root")
class AppRoot extends LitElement {
  static styles = css`
    :host { display: grid; grid-template-columns: minmax(0, 1012fr) minmax(0, 520fr); height: 100vh; overflow: hidden; }
  `;
  render() {
    return html`<process-window></process-window><sheet-window></sheet-window>`;
  }
}
